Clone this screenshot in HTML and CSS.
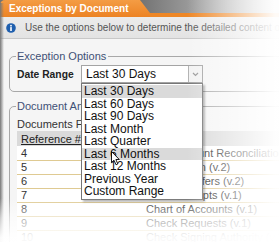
FILE: index.html
```html
<!DOCTYPE html>
<html>
<head>
<meta charset="utf-8">
<link rel="stylesheet" href="styles.css">
</head>
<body>
<div class="window">
  <div class="titlebar">
    <div class="tab">Exceptions by Document</div>
  </div>
  <div class="info">
    <svg class="info-icon" width="10" height="10" viewBox="0 0 10 10">
      <circle cx="5" cy="5" r="4.8" fill="#1f5fae"/>
      <circle cx="5" cy="2.7" r="0.9" fill="#fff"/>
      <rect x="4.2" y="4.1" width="1.6" height="3.9" fill="#fff"/>
    </svg>
    <span class="info-text">Use the options below to determine the detailed content of the report.</span>
  </div>
  <div class="content">
    <fieldset class="group">
      <legend class="legend">Exception Options</legend>
      <div class="field">
        <span class="label">Date Range</span>
        <div class="select">
          <span class="select-value">Last 30 Days</span>
          <span class="select-btn">
            <svg width="7" height="5" viewBox="0 0 7 5"><path d="M1 1 L3.5 3.5 L6 1" fill="none" stroke="#9a9a9a" stroke-width="1.2"/></svg>
          </span>
          <ul class="options">
            <li class="option is-active">Last 30 Days</li>
            <li class="option">Last 60 Days</li>
            <li class="option">Last 90 Days</li>
            <li class="option">Last Month</li>
            <li class="option">Last Quarter</li>
            <li class="option is-hover">Last 6 Months</li>
            <li class="option">Last 12 Months</li>
            <li class="option">Previous Year</li>
            <li class="option">Custom Range</li>
          </ul>
        </div>
      </div>
    </fieldset>
    <fieldset class="group group-docs">
      <legend class="legend">Document Analysis</legend>
      <div class="caption">Documents For Selected Range</div>
      <table class="docs">
        <colgroup><col class="col-ref"><col class="col-name"></colgroup>
        <thead>
          <tr><th><span class="sort">Reference #</span></th><th>Document</th></tr>
        </thead>
        <tbody>
          <tr><td>4</td><td>Bank Account Reconciliation (v.3)</td></tr>
          <tr><td>5</td><td>Budget Plan (v.2)</td></tr>
          <tr><td>6</td><td>Bank Transfers (v.2)</td></tr>
          <tr><td>7</td><td>Cash Receipts (v.1)</td></tr>
          <tr><td>8</td><td>Chart of Accounts (v.1)</td></tr>
          <tr><td>9</td><td>Check Requests (v.1)</td></tr>
          <tr><td>10</td><td>Check Signing Authority (v.1)</td></tr>
        </tbody>
      </table>
    </fieldset>
  </div>
  <svg class="cursor" width="10" height="15" viewBox="0 0 10 15">
    <path d="M0.5 0.5 L0.5 11.5 L3 9.2 L5 13.8 L6.8 13 L4.9 8.5 L8.3 8.5 Z" fill="#fff" stroke="#000" stroke-width="0.9" stroke-linejoin="round"/>
  </svg>
  <div class="fade-right"></div>
  <div class="fade-bottom"></div>
</div>
</body>
</html>
```
FILE: styles.css
```css
* { box-sizing: border-box; }
html, body { margin: 0; padding: 0; }
body {
  width: 279px;
  height: 242px;
  overflow: hidden;
  background: #fff;
  font-family: "Liberation Sans", Arial, sans-serif;
}
.window {
  position: relative;
  width: 279px;
  height: 242px;
  overflow: hidden;
  background: #f5f5f5;
}
.window::before {
  content: "";
  position: absolute;
  left: 0;
  top: 3px;
  bottom: 0;
  width: 4px;
  background: linear-gradient(to right, #777, rgba(210,210,210,0));
  z-index: 3;
}
.titlebar {
  height: 17px;
  display: flex;
  background:
    linear-gradient(to bottom, transparent 13px, #ee8726 13px),
    linear-gradient(to right, #737373 140px, #b9b9b9 230px, #d8d8d8);
}
.tab {
  width: 150px;
  height: 17px;
  padding: 1px 0 0 9px;
  background: linear-gradient(#f49c44, #ec8324);
  border-top-left-radius: 5px;
  clip-path: polygon(0 0, 140px 0, 150px 13px, 150px 100%, 0 100%);
  color: #fff;
  font-weight: bold;
  font-size: 10px;
  line-height: 16px;
  white-space: nowrap;
}
.info {
  height: 22px;
  display: flex;
  align-items: center;
  gap: 9px;
  padding-left: 6px;
  background: linear-gradient(#ebebeb, #e3e3e3);
  border-bottom: 1px solid #c8c8c8;
}
.info-icon { flex: none; }
.info-text {
  font-size: 10px;
  color: #555;
  white-space: nowrap;
}
.content {
  padding: 11px 0 0 9px;
  margin-right: -20px;
}
.group {
  margin: 0;
  min-width: 0;
  border: 1px solid #a8a8a8;
  border-radius: 5px;
  padding: 2px 6px 8px 6px;
}
.group-docs {
  margin-top: 8px;
  padding-bottom: 40px;
}
.legend {
  padding: 0 2px 0 1px;
  font-size: 11px;
  line-height: 13px;
  color: #3f5176;
}
.field {
  display: flex;
  align-items: center;
  padding-left: 1px;
}
.label {
  width: 64px;
  font-weight: bold;
  font-size: 10.3px;
  color: #222;
}
.select {
  position: relative;
  display: flex;
  width: 122px;
  height: 18px;
  border: 1px solid #a4a4a4;
  background: #fff;
}
.select-value {
  flex: 1;
  padding-left: 4px;
  font-size: 12px;
  line-height: 16px;
  color: #111;
}
.select-btn {
  width: 14px;
  display: flex;
  align-items: center;
  justify-content: center;
  border-left: 1px solid #b3b3b3;
  background: #f3f3f3;
}
.options {
  position: absolute;
  top: 17px;
  left: -1px;
  width: 122px;
  margin: 0;
  padding: 1px 0;
  list-style: none;
  background: #fff;
  border: 1px solid #767676;
  box-shadow: 2px 2px 2px rgba(0,0,0,0.3);
  z-index: 2;
}
.option {
  height: 12.5px;
  padding-left: 2px;
  font-size: 12px;
  line-height: 12.5px;
  color: #111;
  white-space: nowrap;
}
.option.is-active, .option.is-hover { background: #dadada; }
.caption {
  padding: 3px 0 0 1px;
  font-size: 11px;
  line-height: 13px;
  color: #333;
  white-space: nowrap;
}
.docs {
  margin-left: 1px;
  width: 280px;
  table-layout: fixed;
  border-collapse: collapse;
  font-size: 11px;
}
.col-ref { width: 125px; }
.docs th {
  height: 15px;
  padding: 0 4px;
  background: #dadada;
  text-align: left;
  font-weight: normal;
  color: #222;
  white-space: nowrap;
  overflow: hidden;
}
.sort { text-decoration: underline; }
.docs td {
  height: 14px;
  padding: 0 4px;
  background: #fff;
  border-bottom: 1px solid #dfca92;
  color: #333;
  white-space: nowrap;
  overflow: hidden;
}
.cursor {
  position: absolute;
  left: 111px;
  top: 151px;
  z-index: 4;
}
.fade-right {
  position: absolute;
  top: 0;
  right: 0;
  bottom: 0;
  width: 92px;
  background: linear-gradient(to right, rgba(255,255,255,0), rgba(255,255,255,0.96) 96%);
  z-index: 5;
}
.fade-bottom {
  position: absolute;
  left: 0;
  right: 0;
  top: 198px;
  height: 44px;
  background: linear-gradient(to bottom, rgba(255,255,255,0), rgba(255,255,255,0.6) 45%, rgba(255,255,255,0.96) 90%);
  z-index: 5;
}
```
